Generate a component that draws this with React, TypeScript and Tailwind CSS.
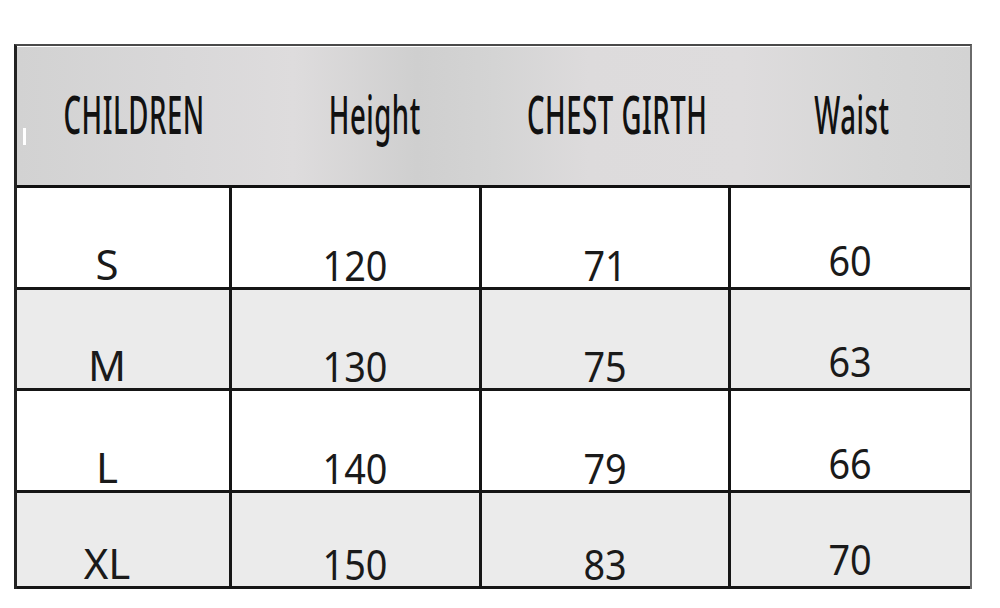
const headers = [
  { label: 'CHILDREN', shift: 'pl-[20px]' },
  { label: 'Height', shift: 'pl-[36px]' },
  { label: 'CHEST GIRTH', shift: 'pl-[22px]' },
  { label: 'Waist', shift: 'pl-[2px]' },
];

const rows = [
  { size: 'S', height: '120', chest: '71', waist: '60', bg: 'bg-white', h: 'h-[102px]' },
  { size: 'M', height: '130', chest: '75', waist: '63', bg: 'bg-[#ebebeb]', h: 'h-[101px]' },
  { size: 'L', height: '140', chest: '79', waist: '66', bg: 'bg-white', h: 'h-[102px]' },
  { size: 'XL', height: '150', chest: '83', waist: '70', bg: 'bg-[#ebebeb]', h: 'h-[96px]' },
];

const colClass = 'grid grid-cols-[215px_250px_249px_239px]';

export default function App() {
  return (
    <div
      className="relative w-[1000px] h-[608px] bg-white pt-[44px] pl-[14px]"
      style={{ fontFamily: '"Noto Sans", "Liberation Sans", sans-serif' }}
    >
      <div className="w-[958px] border-l-[3px] border-l-[#222] border-t-[2px] border-t-[#4a4a4a] border-r-[2px] border-r-[#6a6a6a]">
        {/* header */}
        <div
          className={`${colClass} h-[142px] border-t border-t-white border-b-[3px] border-b-[#111] bg-[linear-gradient(90deg,#d2d2d2_0%,#d9d8d9_18%,#dedcdd_29%,#cfcfcf_42%,#d4d4d4_50%,#dddbdc_60%,#dedcdd_76%,#d6d6d6_90%,#d3d3d3_100%)]`}
        >
          {headers.map((h) => (
            <div key={h.label} className={`flex items-center justify-center pb-[5px] ${h.shift}`}>
              <span className="inline-block whitespace-nowrap text-[52px] leading-none font-medium text-[#111] scale-x-[0.53] tracking-[1px]">
                {h.label}
              </span>
            </div>
          ))}
        </div>

        {/* body */}
        {rows.map((r) => (
          <div key={r.size} className={`${colClass} ${r.h} ${r.bg} border-b-[3px] border-b-[#151515]`}>
            <div className="flex items-end justify-center pr-[32px] pb-[2px] border-r-[3px] border-r-[#151515]">
              <span className="text-[42px] leading-none text-[#1a1a1a]">{r.size}</span>
            </div>
            <div className="flex items-end justify-center pb-[1px] border-r-[3px] border-r-[#151515]">
              <span className="text-[42px] leading-none text-[#1a1a1a] scale-x-[0.9]">{r.height}</span>
            </div>
            <div className="flex items-end justify-center pb-[1px] border-r-[3px] border-r-[#151515]">
              <span className="text-[42px] leading-none text-[#1a1a1a] scale-x-[0.9]">{r.chest}</span>
            </div>
            <div className="flex items-end justify-center pb-[6px]">
              <span className="text-[42px] leading-none text-[#1a1a1a] scale-x-[0.9]">{r.waist}</span>
            </div>
          </div>
        ))}
      </div>

      <div className="absolute left-[23px] top-[128px] w-[3px] h-[17px] bg-white" />
    </div>
  );
}
